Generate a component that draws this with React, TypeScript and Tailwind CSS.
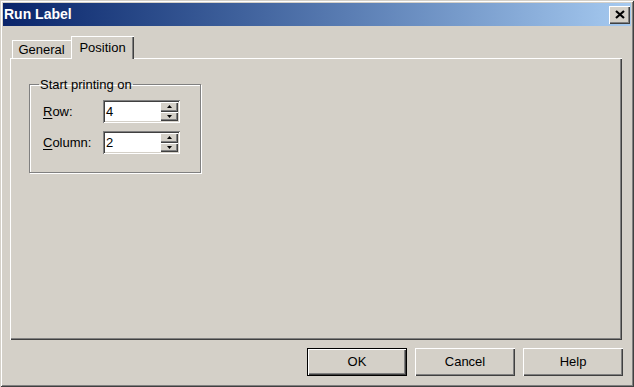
import React from "react";

const raised =
  "shadow-[inset_1px_1px_0_#ffffff,inset_-1px_-1px_0_#404040,inset_-2px_-2px_0_#808080]";
const sunken =
  "shadow-[inset_1px_1px_0_#808080,inset_-1px_-1px_0_#ffffff,inset_2px_2px_0_#404040,inset_-2px_-2px_0_#d4d0c8]";

function SpinField({ value }: { value: string }) {
  return (
    <div className={`flex h-[23px] w-[77px] bg-white p-[2px] ${sunken}`}>
      <div className="flex-1 pl-[1px] text-[13px] leading-[19px] text-black">{value}</div>
      <div className="flex w-[18px] flex-col">
        <div className={`flex flex-1 items-center justify-center bg-[#d4d0c8] ${raised}`}>
          <svg width="5" height="3" viewBox="0 0 5 3">
            <path d="M2.5 0 L5 3 L0 3 Z" fill="#000" />
          </svg>
        </div>
        <div className={`flex flex-1 items-center justify-center bg-[#d4d0c8] ${raised}`}>
          <svg width="5" height="3" viewBox="0 0 5 3">
            <path d="M0 0 L5 0 L2.5 3 Z" fill="#000" />
          </svg>
        </div>
      </div>
    </div>
  );
}

function DialogButton({ label, isDefault }: { label: string; isDefault?: boolean }) {
  return (
    <button
      type="button"
      className={`h-[28px] w-[100px] bg-[#d4d0c8] text-[13px] text-black ${
        isDefault
          ? "border border-black shadow-[inset_1px_1px_0_#ffffff,inset_-1px_-1px_0_#404040,inset_-2px_-2px_0_#808080]"
          : raised
      }`}
    >
      {label}
    </button>
  );
}

export default function App() {
  return (
    <div
      className="flex h-[387px] w-[634px] flex-col bg-[#d4d0c8] p-[3px] text-[13px] text-black shadow-[inset_1px_1px_0_#d4d0c8,inset_-1px_-1px_0_#404040,inset_2px_2px_0_#ffffff,inset_-2px_-2px_0_#808080]"
      style={{ fontFamily: '"Liberation Sans", Arial, sans-serif' }}
    >
      {/* title bar */}
      <div className="flex h-[23px] items-center justify-between bg-gradient-to-r from-[#0a246a] to-[#a6caf0] pl-[1px] pr-[1px]">
        <span className="text-[14px] font-bold text-white">Run Label</span>
        <div className={`flex h-[18px] w-[21px] items-center justify-center bg-[#d4d0c8] ${raised}`}>
          <svg width="10" height="9" viewBox="0 0 10 9">
            <path d="M1 1 L9 8 M9 1 L1 8" stroke="#000" strokeWidth="2.2" />
          </svg>
        </div>
      </div>

      <div className="mt-[10px] flex flex-col pl-[7px] pr-[8px]">
        {/* tabs */}
        <div className="flex items-end pl-[2px]">
          <div className="flex h-[18px] w-[59px] items-center justify-center pt-[1px] shadow-[inset_1px_1px_0_#ffffff]">
            General
          </div>
          <div className="relative z-10 -mb-px flex h-[23px] w-[63px] items-start justify-center bg-[#d4d0c8] pt-[2px] shadow-[inset_1px_1px_0_#ffffff,inset_-1px_0_0_#404040,inset_-2px_0_0_#808080]">
            Position
          </div>
        </div>

        {/* panel */}
        <div className="h-[282px] w-[612px] pl-[19px] pt-[19px] shadow-[inset_1px_1px_0_#ffffff,inset_-1px_-1px_0_#404040,inset_-2px_-2px_0_#808080]">
          <fieldset className="h-[96px] w-[172px] border border-[#808080] px-[13px] pt-[8px] shadow-[inset_1px_1px_0_#ffffff,1px_1px_0_#ffffff]">
            <legend className="ml-[-4px] px-[1px] leading-[15px]">Start printing on</legend>
            <div className="flex flex-col gap-[8px]">
              <div className="flex items-center">
                <span className="w-[60px]">
                  <span className="underline underline-offset-2">R</span>ow:
                </span>
                <SpinField value="4" />
              </div>
              <div className="flex items-center">
                <span className="w-[60px]">
                  <span className="underline underline-offset-2">C</span>olumn:
                </span>
                <SpinField value="2" />
              </div>
            </div>
          </fieldset>
        </div>

        {/* buttons */}
        <div className="mt-[8px] flex justify-end gap-[8px]">
          <DialogButton label="OK" isDefault />
          <DialogButton label="Cancel" />
          <DialogButton label="Help" />
        </div>
      </div>
    </div>
  );
}
